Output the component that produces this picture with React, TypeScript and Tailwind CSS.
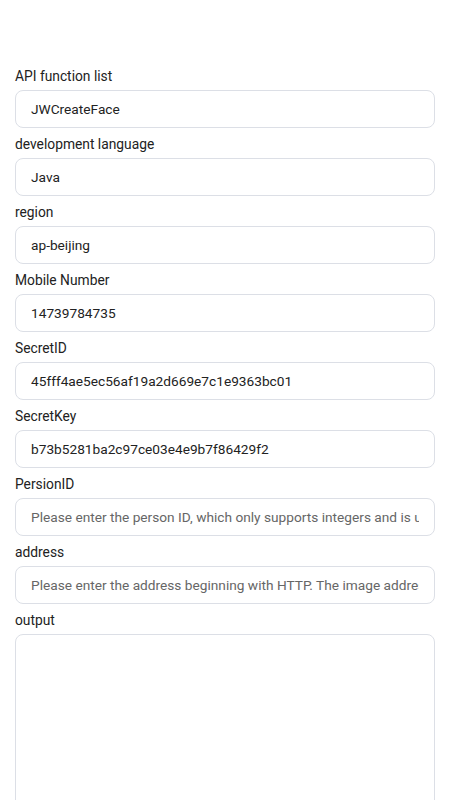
import React from "react"

interface Field {
  label: string
  value?: string
  placeholder?: string
}

const fields: Field[] = [
  { label: "API function list", value: "JWCreateFace" },
  { label: "development language", value: "Java" },
  { label: "region", value: "ap-beijing" },
  { label: "Mobile Number", value: "14739784735" },
  { label: "SecretID", value: "45fff4ae5ec56af19a2d669e7c1e9363bc01" },
  { label: "SecretKey", value: "b73b5281ba2c97ce03e4e9b7f86429f2" },
  {
    label: "PersionID",
    placeholder:
      "Please enter the person ID, which only supports integers and is unique",
  },
  {
    label: "address",
    placeholder:
      "Please enter the address beginning with HTTP. The image address must be accessible",
  },
]

export default function App() {
  return (
    <div
      className="min-h-[800px] w-[450px] bg-white px-[15px] pt-[66px]"
      style={{ fontFamily: "Roboto, 'Liberation Sans', sans-serif" }}
    >
      {fields.map((f, i) => (
        <div key={i} className="mb-[6px]">
          <div className="mb-[4px] h-[20px] text-[13.8px] leading-[21px] text-[#222]">
            {f.label}
          </div>
          <input
            readOnly
            value={f.value ?? ""}
            placeholder={f.placeholder}
            className="block h-[38px] w-[420px] rounded-[8px] border border-[#dcdfe6] bg-white px-[15px] text-[13.7px] text-[#222] outline-none placeholder:text-[#666]"
          />
        </div>
      ))}

      {/* output */}
      <div>
        <div className="mb-[4px] h-[20px] text-[13.8px] leading-[21px] text-[#222]">
          output
        </div>
        <textarea
          readOnly
          className="block h-[200px] w-[420px] resize-none rounded-[8px] border border-[#dcdfe6] bg-white px-[15px] py-[8px] text-[13.7px] outline-none"
        />
      </div>
    </div>
  )
}
